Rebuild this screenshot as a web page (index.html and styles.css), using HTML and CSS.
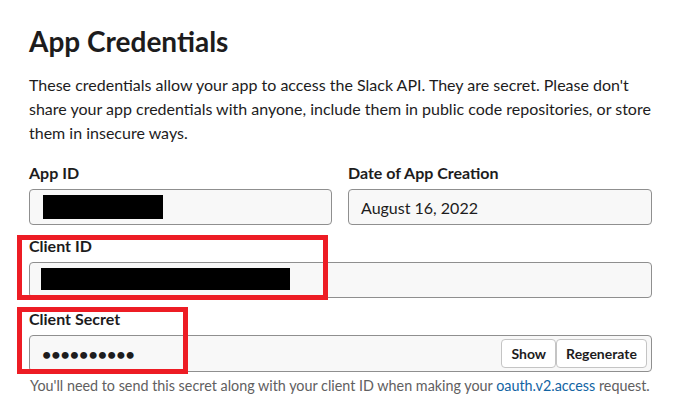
FILE: index.html
```html
<!DOCTYPE html>
<html lang="en">
<head>
<meta charset="utf-8">
<title>App Credentials</title>
<link rel="stylesheet" href="styles.css">
</head>
<body>
<main class="page">
  <h1 class="title">App Credentials</h1>
  <p class="intro">These credentials allow your app to access the Slack API. They are secret. Please don't share your app credentials with anyone, include them in public code repositories, or store them in insecure ways.</p>

  <div class="row">
    <div class="field">
      <label class="label">App ID</label>
      <div class="input"><span class="redact redact-app"></span></div>
    </div>
    <div class="field">
      <label class="label">Date of App Creation</label>
      <div class="input">August 16, 2022</div>
    </div>
  </div>

  <div class="field field-stacked">
    <label class="label">Client ID</label>
    <div class="input"><span class="redact redact-client"></span></div>
  </div>

  <div class="field field-stacked">
    <label class="label">Client Secret</label>
    <div class="input input-secret">
      <span class="dots">••••••••••</span>
      <span class="btns">
        <button class="btn">Show</button><button class="btn">Regenerate</button>
      </span>
    </div>
    <p class="help">You'll need to send this secret along with your client ID when making your <a class="link" href="#">oauth.v2.access</a> request.</p>
  </div>

  <div class="mark mark-client"></div>
  <div class="mark mark-secret"></div>
</main>
</body>
</html>
```

FILE: styles.css
```css
* { box-sizing: border-box; }

html, body {
  margin: 0;
  padding: 0;
  background: #ffffff;
}

body {
  font-family: Lato, "Noto Sans", sans-serif;
  color: #1d1c1d;
  width: 675px;
  height: 408px;
  overflow: hidden;
}

.page {
  position: relative;
  width: 652px;
  padding: 23px 0 0 29px;
}

.title {
  margin: 0;
  font-size: 28px;
  line-height: 36px;
  font-weight: 700;
}

.intro {
  margin: 14px 0 0 0;
  font-size: 16px;
  line-height: 24px;
}

.row {
  display: grid;
  grid-template-columns: 303px 304px;
  column-gap: 16px;
  margin-top: 16px;
}

.field {
  display: flex;
  flex-direction: column;
}

.field-stacked {
  margin-top: 9px;
}

.label {
  font-size: 16px;
  line-height: 24px;
  font-weight: 700;
  margin-bottom: 4px;
}

.input {
  height: 36px;
  display: flex;
  align-items: center;
  padding: 0 4px 0 12px;
  background: #f8f8f8;
  border: 1px solid #8f8f8f;
  border-radius: 4px;
  font-size: 16px;
  color: #1d1c1d;
}

.redact {
  display: inline-block;
  background: #000000;
}

.redact-app {
  width: 120px;
  height: 24px;
  margin-left: 1px;
}

.redact-client {
  width: 249px;
  height: 22px;
  margin-top: -3px;
  margin-left: -1px;
}

.input-secret {
  height: 37px;
  justify-content: space-between;
}

.dots {
  font-size: 16px;
  letter-spacing: 0;
  font-weight: 700;
  margin-left: 0;
}

.btns {
  display: flex;
}

.btn {
  font-family: Lato, "Noto Sans", sans-serif;
  font-size: 14px;
  font-weight: 700;
  color: #1d1c1d;
  height: 29px;
  padding: 0 9px;
  background: #ffffff;
  border: 1px solid #c4c4c4;
  border-radius: 4px;
  margin: 0;
}

.help {
  margin: 5px 0 0 1px;
  font-size: 14.35px;
  line-height: 18px;
  color: #616061;
}

.link {
  color: #1264a3;
  text-decoration: none;
}

.mark {
  position: absolute;
  border: 5px solid #ed1c24;
}

.mark-client {
  left: 17px;
  top: 235px;
  width: 311px;
  height: 65px;
}

.mark-secret {
  left: 17px;
  top: 307px;
  width: 171px;
  height: 67px;
}
```
